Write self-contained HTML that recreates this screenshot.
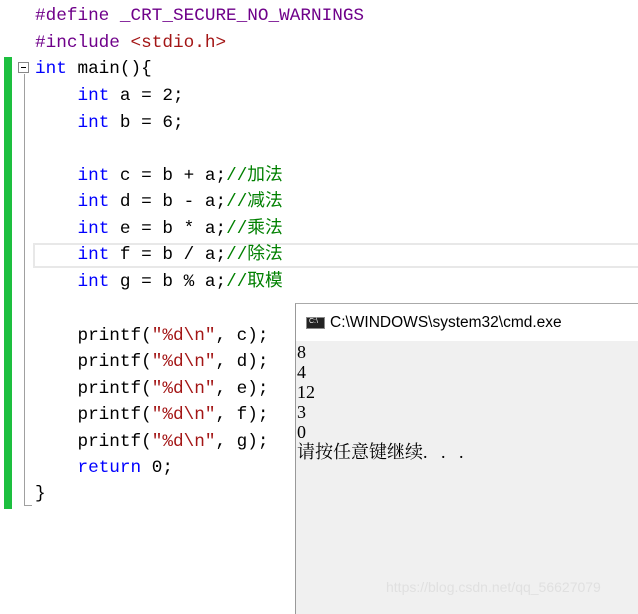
<!DOCTYPE html>
<html><head><meta charset="utf-8"><style>
body{margin:0;width:638px;height:607px;background:#fff;position:relative;overflow:hidden;font-family:"Liberation Mono","Noto Sans CJK SC",monospace}
.l{position:absolute;left:35px;font-size:17.7px;line-height:26px;white-space:pre;color:#000}
.k{color:#0000ff}.p{color:#6f008a}.s{color:#a31515}.c{color:#008000}
#green{position:absolute;left:4px;top:57px;width:8px;height:452px;background:#1dbf3f}
#fold{position:absolute;left:18px;top:62px;width:11px;height:11px;border:1px solid #888;box-sizing:border-box;background:#fff}
#fold:after{content:"";position:absolute;left:2px;top:4px;width:5px;height:1px;background:#000}
#vline{position:absolute;left:24px;top:74px;width:1px;height:432px;background:#a0a0a0}
#vend{position:absolute;left:24px;top:505px;width:8px;height:1px;background:#a0a0a0}
#cur{position:absolute;left:33px;top:243px;width:610px;height:25px;border:2px solid #e8e8e8;box-sizing:border-box}
#cmd{position:absolute;left:295px;top:303px;width:350px;height:310px;background:#f0f0f0;border-left:1px solid #999;border-top:1px solid #aaa}
#title{height:37px;background:#fff;position:relative;font-family:"Liberation Sans",sans-serif;font-size:15.5px}
#title span{position:absolute;left:34px;top:10px}
#ico{position:absolute;left:10px;top:13px;width:19px;height:12px;background:#222;border:1px solid #888;box-sizing:border-box}
#ico:after{content:"C:\\";position:absolute;left:2px;top:0;font-size:7px;color:#fff;font-family:"Liberation Sans"}
#out{position:absolute;left:1px;top:38px;font-family:"Liberation Serif","Noto Serif CJK SC",serif;font-size:18px;line-height:20px;color:#000;white-space:pre}
#wm{position:absolute;left:386px;top:579px;font-family:"Liberation Sans",sans-serif;font-size:14px;color:#e0e0e0}
</style></head><body>
<div id="green"></div><div id="vline"></div><div id="vend"></div><div id="fold"></div>
<div id="cur"></div>
<div class="l p" style="top:3px">#define _CRT_SECURE_NO_WARNINGS</div>
<div class="l" style="top:30px"><span class="p">#include</span> <span class="s">&lt;stdio.h&gt;</span></div>
<div class="l" style="top:56px"><span class="k">int</span> main(){</div>
<div class="l" style="top:83px">    <span class="k">int</span> a = 2;</div>
<div class="l" style="top:110px">    <span class="k">int</span> b = 6;</div>
<div class="l" style="top:163px">    <span class="k">int</span> c = b + a;<span class="c">//加法</span></div>
<div class="l" style="top:189px">    <span class="k">int</span> d = b - a;<span class="c">//减法</span></div>
<div class="l" style="top:216px">    <span class="k">int</span> e = b * a;<span class="c">//乘法</span></div>
<div class="l" style="top:242px">    <span class="k">int</span> f = b / a;<span class="c">//除法</span></div>
<div class="l" style="top:269px">    <span class="k">int</span> g = b % a;<span class="c">//取模</span></div>
<div class="l" style="top:323px">    printf(<span class="s">"%d\n"</span>, c);</div>
<div class="l" style="top:349px">    printf(<span class="s">"%d\n"</span>, d);</div>
<div class="l" style="top:376px">    printf(<span class="s">"%d\n"</span>, e);</div>
<div class="l" style="top:402px">    printf(<span class="s">"%d\n"</span>, f);</div>
<div class="l" style="top:429px">    printf(<span class="s">"%d\n"</span>, g);</div>
<div class="l" style="top:455px">    <span class="k">return</span> 0;</div>
<div class="l" style="top:481px">}</div>
<div id="cmd"><div id="title"><div id="ico"></div><span>C:\WINDOWS\system32\cmd.exe</span></div>
<div id="out">8
4
12
3
0
请按任意键继续.   .   .</div></div>
<div id="wm">https://blog.csdn.net/qq_56627079</div>
</body></html>
